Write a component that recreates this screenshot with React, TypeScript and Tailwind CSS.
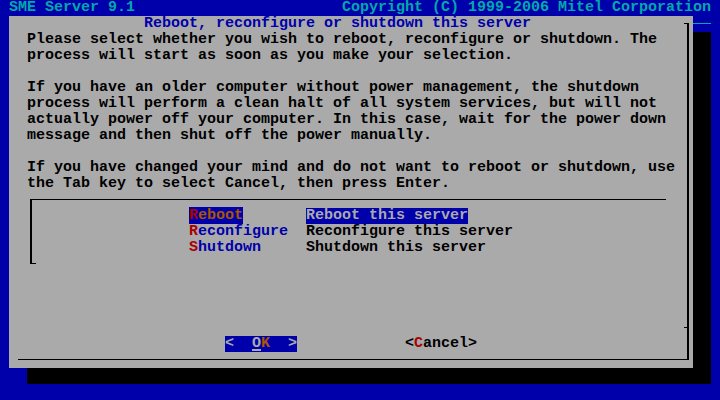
const lines = [
  "Please select whether you wish to reboot, reconfigure or shutdown. The",
  "process will start as soon as you make your selection.",
  "",
  "If you have an older computer without power management, the shutdown",
  "process will perform a clean halt of all system services, but will not",
  "actually power off your computer. In this case, wait for the power down",
  "message and then shut off the power manually.",
  "",
  "If you have changed your mind and do not want to reboot or shutdown, use",
  "the Tab key to select Cancel, then press Enter.",
];

const items = [
  { hot: "R", rest: "eboot", desc: "Reboot this server", selected: true },
  { hot: "R", rest: "econfigure", desc: "Reconfigure this server", selected: false },
  { hot: "S", rest: "hutdown", desc: "Shutdown this server", selected: false },
];

export default function App() {
  return (
    <div className="w-[720px] h-[400px] overflow-hidden bg-[#0000aa] font-['Liberation_Mono','DejaVu_Sans_Mono',monospace] text-[15px] leading-[16px] font-bold whitespace-pre">
      {/* top status line */}
      <div className="h-[16px] flex justify-between px-[9px] text-[#00aaaa]">
        <span>SME Server 9.1</span>
        <span>Copyright (C) 1999-2006 Mitel Corporation</span>
      </div>

      <div className="flex">
        {/* dialog */}
        <div className="ml-[9px] w-[684px] h-[352px] bg-[#aaaaaa] shadow-[18px_16px_0_0_#000] flex flex-col">
          <div className="h-[16px] flex">
            <span className="pl-[135px] text-[#0000aa]">Reboot, reconfigure or shutdown this server</span>
            <div className="ml-auto mr-[4px] mt-[7px] w-[5px] h-[9px] border-t border-r-2 border-black" />
          </div>

          <div className="ml-[9px] mr-[4px] h-[328px] border-r-2 border-b border-black flex flex-col text-black">
            {lines.map((l, i) => (
              <div key={i} className="h-[16px] pl-[9px]">{l}</div>
            ))}

            {/* listbox */}
            <div className="ml-[12px] mt-[7px] mb-[8px] w-[636px] border-t border-l-2 border-black flex flex-col">
              <div className="h-[8px]" />
              {items.map((it, i) => (
                <div key={i} className="h-[16px] flex pl-[157px]">
                  <div className="w-[117px]">
                    <span className={it.selected ? "bg-[#0000aa]" : ""}>
                      <span className="text-[#aa0000]">{it.hot}</span>
                      <span className={it.selected ? "text-[#aa5500]" : "text-[#0000aa]"}>{it.rest}</span>
                    </span>
                  </div>
                  <span className={it.selected ? "bg-[#0000aa] text-[#aaaaaa]" : "text-black"}>{it.desc}</span>
                </div>
              ))}
              <div className="h-[8px] w-[4px] border-b border-black" />
            </div>

            <div className="h-[48px]" />
            <div className="h-[16px] flex justify-end">
              <div className="mt-[7px] w-[3px] h-px bg-black" />
            </div>

            {/* buttons */}
            <div className="h-[16px] pl-[207px] flex">
              <div className="w-[72px] h-[16px] flex bg-[#0000aa] text-[#aaaaaa]">
                <span className="w-[27px]">{"<"}</span>
                <span className="relative w-[9px]">
                  O
                  <span className="absolute left-0 bottom-[1px] w-[9px] h-[2px] bg-[#aaaaaa]" />
                </span>
                <span className="w-[27px] text-[#aa5500]">K</span>
                <span className="w-[9px]">{">"}</span>
              </div>
              <span className="ml-[108px]">
                {"<"}
                <span className="text-[#aa0000]">C</span>
                {"ancel>"}
              </span>
            </div>
          </div>
        </div>

        <div className="w-[18px]">
          <div className="mt-[7px] h-px bg-[#00aaaa]" />
        </div>
      </div>
    </div>
  );
}
